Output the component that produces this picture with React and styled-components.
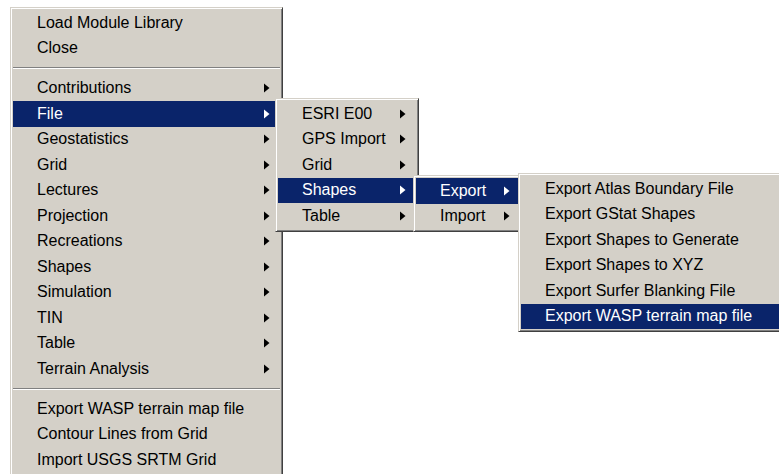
import React from "react";
import styled, { createGlobalStyle } from "styled-components";

const GlobalStyle = createGlobalStyle`
  html, body {
    margin: 0;
    padding: 0;
    background: #ffffff;
    overflow: hidden;
  }
  * { box-sizing: border-box; }
`;

const Desktop = styled.div`
  position: relative;
  width: 779px;
  height: 474px;
  overflow: hidden;
  background: #ffffff;
  padding: 7px 0 0 10px;
  font-family: "Liberation Sans", Arial, sans-serif;
  font-size: 16px;
  color: #000000;
`;

/* Classic 3D popup frame: light top/left, dark bottom/right */
const Popup = styled.div`
  width: ${(p) => p.$width}px;
  background: #d4d0c8;
  border: 1px solid;
  border-color: #d4d0c8 #404040 #404040 #d4d0c8;
  box-shadow: inset 1px 1px 0 #ffffff, inset -1px -1px 0 #808080;
  padding: 2px;
  display: flex;
  flex-direction: column;
`;

const FloatingPopup = styled(Popup)`
  position: absolute;
  left: ${(p) => p.$left}px;
  top: ${(p) => p.$top}px;
  z-index: ${(p) => p.$layer};
`;

const Item = styled.div`
  display: flex;
  align-items: center;
  height: 25.5px;
  padding: 0 10px 0 24px;
  background: ${(p) => (p.$active ? "#0a246a" : "transparent")};
  color: ${(p) => (p.$active ? "#ffffff" : "#000000")};
  white-space: nowrap;
`;

const Label = styled.span`
  flex: 1;
  line-height: 1;
`;

const Arrow = styled.svg`
  width: 6px;
  height: 10px;
  flex: none;
  fill: ${(p) => (p.$active ? "#ffffff" : "#000000")};
`;

const Separator = styled.div`
  height: 14.5px;
  display: flex;
  align-items: center;
  &::before {
    content: "";
    flex: 1;
    height: 0;
    border-top: 1px solid #808080;
    border-bottom: 1px solid #ffffff;
  }
`;

const mainItems = [
  { label: "Load Module Library" },
  { label: "Close" },
  { sep: true },
  { label: "Contributions", sub: true },
  { label: "File", sub: true, active: true },
  { label: "Geostatistics", sub: true },
  { label: "Grid", sub: true },
  { label: "Lectures", sub: true },
  { label: "Projection", sub: true },
  { label: "Recreations", sub: true },
  { label: "Shapes", sub: true },
  { label: "Simulation", sub: true },
  { label: "TIN", sub: true },
  { label: "Table", sub: true },
  { label: "Terrain Analysis", sub: true },
  { sep: true },
  { label: "Export WASP terrain map file" },
  { label: "Contour Lines from Grid" },
  { label: "Import USGS SRTM Grid" },
];

const fileItems = [
  { label: "ESRI E00", sub: true },
  { label: "GPS Import", sub: true },
  { label: "Grid", sub: true },
  { label: "Shapes", sub: true, active: true },
  { label: "Table", sub: true },
];

const shapesItems = [
  { label: "Export", sub: true, active: true },
  { label: "Import", sub: true },
];

const exportItems = [
  { label: "Export Atlas Boundary File" },
  { label: "Export GStat Shapes" },
  { label: "Export Shapes to Generate" },
  { label: "Export Shapes to XYZ" },
  { label: "Export Surfer Blanking File" },
  { label: "Export WASP terrain map file", active: true },
];

function MenuRows({ items }) {
  return items.map((it, i) =>
    it.sep ? (
      <Separator key={i} />
    ) : (
      <Item key={i} $active={it.active}>
        <Label>{it.label}</Label>
        {it.sub && (
          <Arrow $active={it.active} viewBox="0 0 6 10">
            <path d="M0 0.5 L5.5 5 L0 9.5 Z" />
          </Arrow>
        )}
      </Item>
    )
  );
}

export default function App() {
  return (
    <>
      <GlobalStyle />
      <Desktop>
        <Popup $width={273}>
          <MenuRows items={mainItems} />
        </Popup>
        <FloatingPopup $left={275} $top={98} $width={144} $layer={2}>
          <MenuRows items={fileItems} />
        </FloatingPopup>
        <FloatingPopup $left={413} $top={175} $width={110} $layer={3}>
          <MenuRows items={shapesItems} />
        </FloatingPopup>
        <FloatingPopup $left={518} $top={173} $width={290} $layer={4}>
          <MenuRows items={exportItems} />
        </FloatingPopup>
      </Desktop>
    </>
  );
}
